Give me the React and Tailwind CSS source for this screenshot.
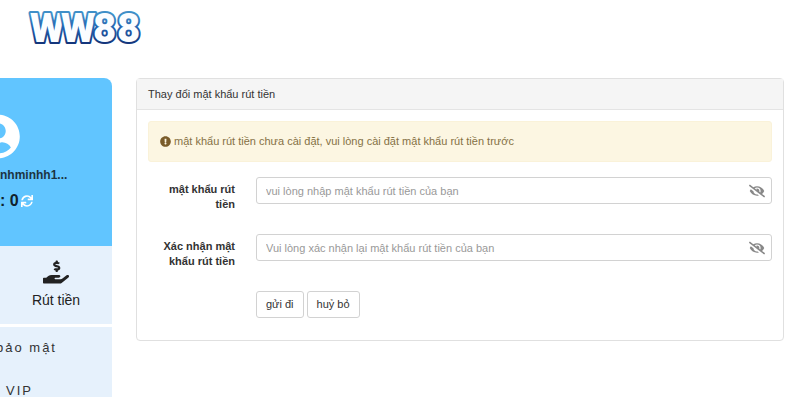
import { useState } from 'react';
import {
  FaUserCircle,
  FaSync,
  FaHandHoldingUsd,
  FaExclamationCircle,
  FaEyeSlash,
  FaEye
} from 'react-icons/fa';

const fields = [
  {
    id: 'password',
    label: 'mật khẩu rút tiền',
    placeholder: 'vui lòng nhập mật khẩu rút tiền của bạn'
  },
  {
    id: 'confirm',
    label: 'Xác nhận mật khẩu rút tiền',
    placeholder: 'Vui lòng xác nhận lại mật khẩu rút tiền của bạn'
  }
];

function Logo() {
  return (
    <a href="#" className="block w-fit" aria-label="WW88">
      <svg width="124" height="52" viewBox="0 0 124 52" aria-hidden="true">
        <defs>
          <linearGradient id="logo-edge" x1="0" y1="0" x2="0" y2="1">
            <stop offset="0.2" stopColor="#3f8fc8" />
            <stop offset="0.5" stopColor="#1f5fae" />
            <stop offset="0.8" stopColor="#14367c" />
          </linearGradient>
        </defs>
        <text
          x="4 35 67 91"
          y="38"
          fontFamily="Roboto, 'Liberation Sans', sans-serif"
          fontSize="40"
          fontWeight="900"
          fill="#fbfdff"
          stroke="url(#logo-edge)"
          strokeWidth="4"
          strokeLinejoin="round"
          paintOrder="stroke"
        >
          WW88
        </text>
      </svg>
    </a>
  );
}

function Sidebar() {
  return (
    <aside className="w-28 shrink-0 overflow-hidden rounded-tr-lg">
      <div className="h-[168px] bg-[#61c5ff] pt-9">
        <FaUserCircle className="-ml-6 h-[45px] w-11 text-white" />
        <p className="mt-2 text-xs leading-4 font-bold whitespace-nowrap text-[#1c3442]">nhminhh1...</p>
        <div className="mt-2 flex h-5 items-center gap-0.5 text-base font-bold text-[#10222c]">
          <span>: 0</span>
          <button type="button" aria-label="Refresh" className="text-white">
            <FaSync className="h-3 w-3" />
          </button>
        </div>
      </div>

      <a href="#" className="flex h-[78px] flex-col items-center bg-[#e6f1fc] pt-[13px] text-[#222]">
        <FaHandHoldingUsd className="h-[26px] w-[26px]" />
        <span className="mt-[5px] text-sm leading-5">Rút tiền</span>
      </a>

      <nav className="mt-[3px] bg-[#e6f1fc] pt-[15px] text-[13px] leading-3 tracking-[2px] text-[#333]">
        <a href="#" className="-ml-1 block whitespace-nowrap">bảo mật</a>
        <a href="#" className="mt-[31px] block pl-1.5">VIP</a>
      </nav>
    </aside>
  );
}

function PasswordField({ id, label, placeholder }) {
  const [visible, setVisible] = useState(false);

  return (
    <div className="flex items-start gap-[21px]">
      <label htmlFor={id} className="w-[87px] shrink-0 pt-[5px] text-right text-[11px] leading-[15px] font-bold text-[#333]">
        {label}
      </label>
      <div className="flex h-[27px] flex-1 items-center rounded-[3px] border border-[#d2d2d2] pr-1.5">
        <input
          id={id}
          type={visible ? 'text' : 'password'}
          placeholder={placeholder}
          className="h-full min-w-0 flex-1 px-[9px] text-[11px] text-[#555] placeholder-[#999] outline-none"
        />
        <button
          type="button"
          aria-label="Toggle password visibility"
          onClick={() => setVisible(!visible)}
          className="text-[#888]"
        >
          {visible ? <FaEye className="h-4 w-4" /> : <FaEyeSlash className="h-4 w-4" />}
        </button>
      </div>
    </div>
  );
}

export default function App() {
  return (
    <div className="bg-white font-['Liberation_Sans',Arial,sans-serif] text-[#333]">
      <header className="h-[78px] pt-1 pl-[26px]">
        <Logo />
      </header>

      <div className="flex items-start gap-6 pr-4">
        <Sidebar />

        <main className="min-w-0 flex-1 rounded border border-[#e0e0e0]">
          <h1 className="border-b border-[#e4e4e4] bg-[#f5f5f5] px-[11px] py-2 text-[11px] leading-[14px]">
            Thay đổi mật khẩu rút tiền
          </h1>
          <div className="px-[11px] pt-[11px] pb-[22px]">
            <div
              role="alert"
              className="flex h-[41px] items-center gap-[3px] rounded-[3px] border border-[#faf2d9] bg-[#fcf6e2] px-[11px] text-[11px] text-[#857145]"
            >
              <FaExclamationCircle className="h-[11px] w-[11px] text-[#7a5c2a]" />
              mật khẩu rút tiền chưa cài đặt, vui lòng cài đặt mật khẩu rút tiền trước
            </div>

            <form className="mt-[15px] flex flex-col gap-[22px]" onSubmit={(e) => e.preventDefault()}>
              {fields.map((field) => (
                <PasswordField key={field.id} {...field} />
              ))}
              <div className="flex gap-[3px] pl-27">
                <button type="submit" className="h-[27px] rounded-[3px] border border-[#d2d2d2] px-[9px] text-[11px]">
                  gửi đi
                </button>
                <button type="reset" className="h-[27px] rounded-[3px] border border-[#d2d2d2] px-[9px] text-[11px]">
                  huỷ bỏ
                </button>
              </div>
            </form>
          </div>
        </main>
      </div>
    </div>
  );
}
